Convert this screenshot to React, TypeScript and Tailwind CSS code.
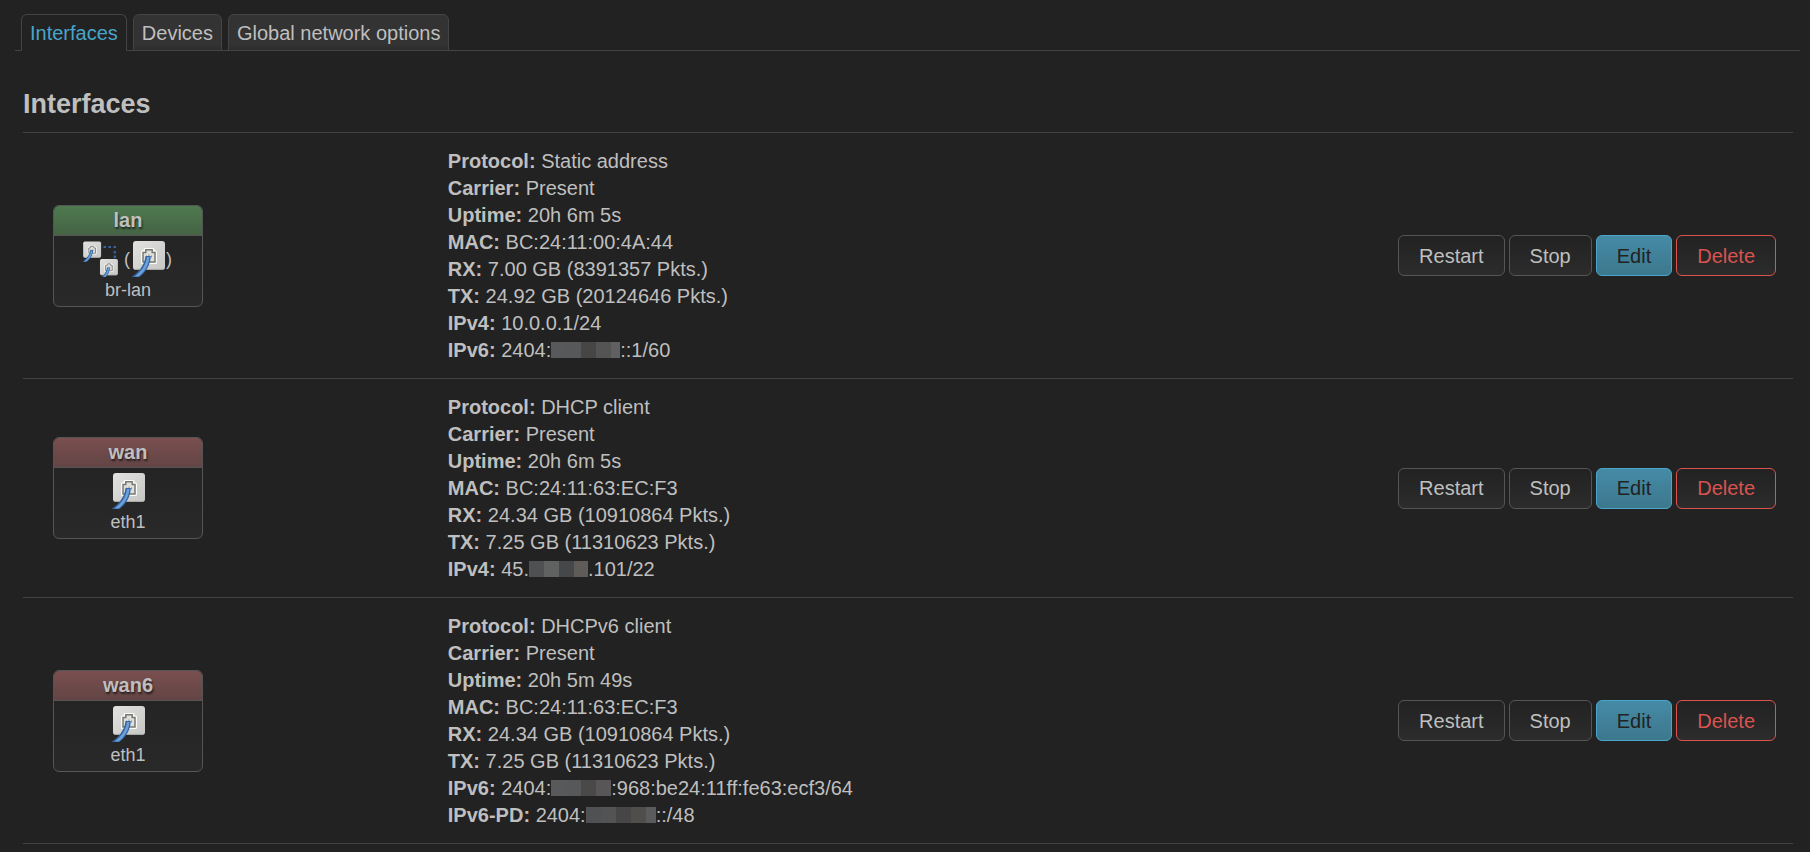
import { useState } from "react";
import type { ReactNode } from "react";

type Field = { label: string; value: ReactNode };

type Iface = {
  name: string;
  device: string;
  bridge?: boolean;
  fields: Field[];
};

const TABS = ["Interfaces", "Devices", "Global network options"] as const;

// Blocks that hide the private part of an address
function Masked({ colors, last = 15 }: { colors: string[]; last?: number }) {
  return (
    <span className="inline-flex h-4 align-[-1px]" aria-hidden="true">
      {colors.map((c, i) => (
        <span
          key={i}
          className="block h-4"
          style={{ background: c, width: i === colors.length - 1 ? last : 15 }}
        />
      ))}
    </span>
  );
}

const INTERFACES: Iface[] = [
  {
    name: "lan",
    device: "br-lan",
    bridge: true,
    fields: [
      { label: "Protocol", value: "Static address" },
      { label: "Carrier", value: "Present" },
      { label: "Uptime", value: "20h 6m 5s" },
      { label: "MAC", value: "BC:24:11:00:4A:44" },
      { label: "RX", value: "7.00 GB (8391357 Pkts.)" },
      { label: "TX", value: "24.92 GB (20124646 Pkts.)" },
      { label: "IPv4", value: "10.0.0.1/24" },
      {
        label: "IPv6",
        value: (
          <>
            2404:
            <Masked colors={["#58595b", "#57585a", "#474645", "#545455", "#606061"]} last={9} />
            ::1/60
          </>
        ),
      },
    ],
  },
  {
    name: "wan",
    device: "eth1",
    fields: [
      { label: "Protocol", value: "DHCP client" },
      { label: "Carrier", value: "Present" },
      { label: "Uptime", value: "20h 6m 5s" },
      { label: "MAC", value: "BC:24:11:63:EC:F3" },
      { label: "RX", value: "24.34 GB (10910864 Pkts.)" },
      { label: "TX", value: "7.25 GB (11310623 Pkts.)" },
      {
        label: "IPv4",
        value: (
          <>
            45.
            <Masked colors={["#4f5051", "#606161", "#464749", "#5e5b59"]} last={14} />
            .101/22
          </>
        ),
      },
    ],
  },
  {
    name: "wan6",
    device: "eth1",
    fields: [
      { label: "Protocol", value: "DHCPv6 client" },
      { label: "Carrier", value: "Present" },
      { label: "Uptime", value: "20h 5m 49s" },
      { label: "MAC", value: "BC:24:11:63:EC:F3" },
      { label: "RX", value: "24.34 GB (10910864 Pkts.)" },
      { label: "TX", value: "7.25 GB (11310623 Pkts.)" },
      {
        label: "IPv6",
        value: (
          <>
            2404:
            <Masked colors={["#58595b", "#57585a", "#4b4947", "#585657"]} />
            :968:be24:11ff:fe63:ecf3/64
          </>
        ),
      },
      {
        label: "IPv6-PD",
        value: (
          <>
            2404:
            <Masked colors={["#505153", "#535353", "#474646", "#504e4b", "#5a5b5c"]} last={10} />
            ::/48
          </>
        ),
      },
    ],
  },
];

function Plug() {
  return (
    <>
      <rect x="3" y="0" width="32" height="29" rx="3" fill="url(#plate)" />
      <path d="M5 28.4h28" stroke="#a5a6a2" strokeWidth="1" />
      <path d="M12.500 21.500V11h2.500V8.500h8V11h2.500v10.500z" fill="#fbfbfa" stroke="#fbfbfa" strokeWidth="3" strokeLinejoin="round" />
      <path d="M13 21V11.500h2.800V8.700h6.400v2.800H25V21z" fill="#dfe0de" stroke="#777972" strokeWidth="1.500" />
      <path d="M16.500 14.500v2M19 13.500v2M21.500 14.500v2" stroke="#8c8e88" strokeWidth="1" />
      <path d="M1.500 36C9 31 14.500 24 15.500 15h5.300C20.500 24 16 31 9.500 36z" fill="#3465a4" />
      <path d="M4.500 35.600C11.500 30.500 16 24 16.900 16h2.500C19 24 14.500 31 8.500 35.600z" fill="#6d9fd8" />
    </>
  );
}

function PlateDefs() {
  return (
    <svg width="0" height="0" className="absolute" aria-hidden="true">
      <defs>
        <linearGradient id="plate" x1="0" y1="0" x2="1" y2="1">
          <stop offset="0" stopColor="#e2e2e0" />
          <stop offset="1" stopColor="#c6c7c4" />
        </linearGradient>
      </defs>
    </svg>
  );
}

function EthernetIcon() {
  return (
    <svg viewBox="0 0 36 36" className="size-9 shrink-0" aria-hidden="true">
      <Plug />
    </svg>
  );
}

function BridgeIcon() {
  return (
    <svg viewBox="0 0 36 36" className="size-9 shrink-0" aria-hidden="true">
      <path
        d="M21.500 6H24M26.500 6H29M31.500 6H34M32.800 10v2.500M32.800 14.500V17"
        stroke="#3465a4"
        strokeWidth="2.200"
      />
      <g transform="translate(-.5 .5) scale(.56)">
        <Plug />
      </g>
      <g transform="translate(16.3 18) scale(.56)">
        <Plug />
      </g>
    </svg>
  );
}

function IfaceCard({ iface }: { iface: Iface }) {
  return (
    <div className="w-[150px] overflow-hidden rounded-md border border-[#555] bg-linear-to-b from-[#222] to-[#292929] text-center">
      <div
        className={`h-[30px] border-b border-[#555] text-xl leading-[29px] font-bold text-shadow-[1px_2px_2px_#0009] ${
          iface.bridge
            ? "bg-linear-to-b from-[#4f794f] to-[#456345]"
            : "bg-linear-to-b from-[#7a4f4f] to-[#634545]"
        }`}
      >
        {iface.name}
      </div>
      <div className="px-1 pt-[5px] pb-1 text-lg leading-6">
        <div className="mb-px flex items-center justify-center">
          {iface.bridge ? (
            <>
              <BridgeIcon />
              <span className="ml-1.5">(</span>
              <EthernetIcon />
              <span className="mr-0.5">)</span>
            </>
          ) : (
            <EthernetIcon />
          )}
        </div>
        <div>{iface.device}</div>
      </div>
    </div>
  );
}

const BTN = "h-[41px] rounded-md border px-5 text-xl leading-6 bg-linear-to-b";

function Actions() {
  return (
    <div className="flex justify-end gap-1">
      <button type="button" className={`${BTN} border-[#555] from-[#222] to-[#2c2c2c]`}>
        Restart
      </button>
      <button type="button" className={`${BTN} border-[#555] from-[#222] to-[#2c2c2c]`}>
        Stop
      </button>
      <button type="button" className={`${BTN} border-[#49a5c9] from-[#458ba5] to-[#3c788d] text-[#222]`}>
        Edit
      </button>
      <button type="button" className={`${BTN} border-[#d9534f] from-[#222] to-[#2c2c2c] text-[#d9534f]`}>
        Delete
      </button>
    </div>
  );
}

export default function App() {
  const [tab, setTab] = useState<string>("Interfaces");

  return (
    <main className="min-h-screen bg-[#222] pt-3.5 pr-2.5 pb-2 pl-[15px] font-['Liberation_Sans',Arial,sans-serif] text-xl leading-[27px] text-[#bfbfbf]">
      <PlateDefs />
      <nav className="flex gap-1.5 border-b border-[#444] pl-1.5">
        {TABS.map((t) => (
          <button
            key={t}
            type="button"
            onClick={() => setTab(t)}
            className={`-mb-px h-[37px] rounded-t-md border px-2 pt-px ${
              tab === t
                ? "border-[#444] border-b-[#222] bg-[#222] text-[#49a5c9]"
                : "border-[#444] bg-linear-to-b from-[#333] from-85% to-[#2c2c2c]"
            }`}
          >
            {t}
          </button>
        ))}
      </nav>

      <section className="pt-[37px] pr-[7px] pl-2">
        <h3 className="pb-[11px] text-[27px] leading-[33px] font-bold">Interfaces</h3>
        <table className="w-full table-fixed border-collapse border-b border-[#444]">
          <tbody>
            {INTERFACES.map((iface) => (
              <tr key={iface.name} className="border-t border-[#444]">
                <td className="w-[24%] pl-[30px] align-middle">
                  <IfaceCard iface={iface} />
                </td>
                <td className="pt-[15px] pb-3.5 align-middle">
                  {iface.fields.map((f) => (
                    <div key={f.label}>
                      <strong>{f.label}:</strong> {f.value}
                    </div>
                  ))}
                </td>
                <td className="w-[30%] pr-[17px] align-middle">
                  <Actions />
                </td>
              </tr>
            ))}
          </tbody>
        </table>
      </section>
    </main>
  );
}
